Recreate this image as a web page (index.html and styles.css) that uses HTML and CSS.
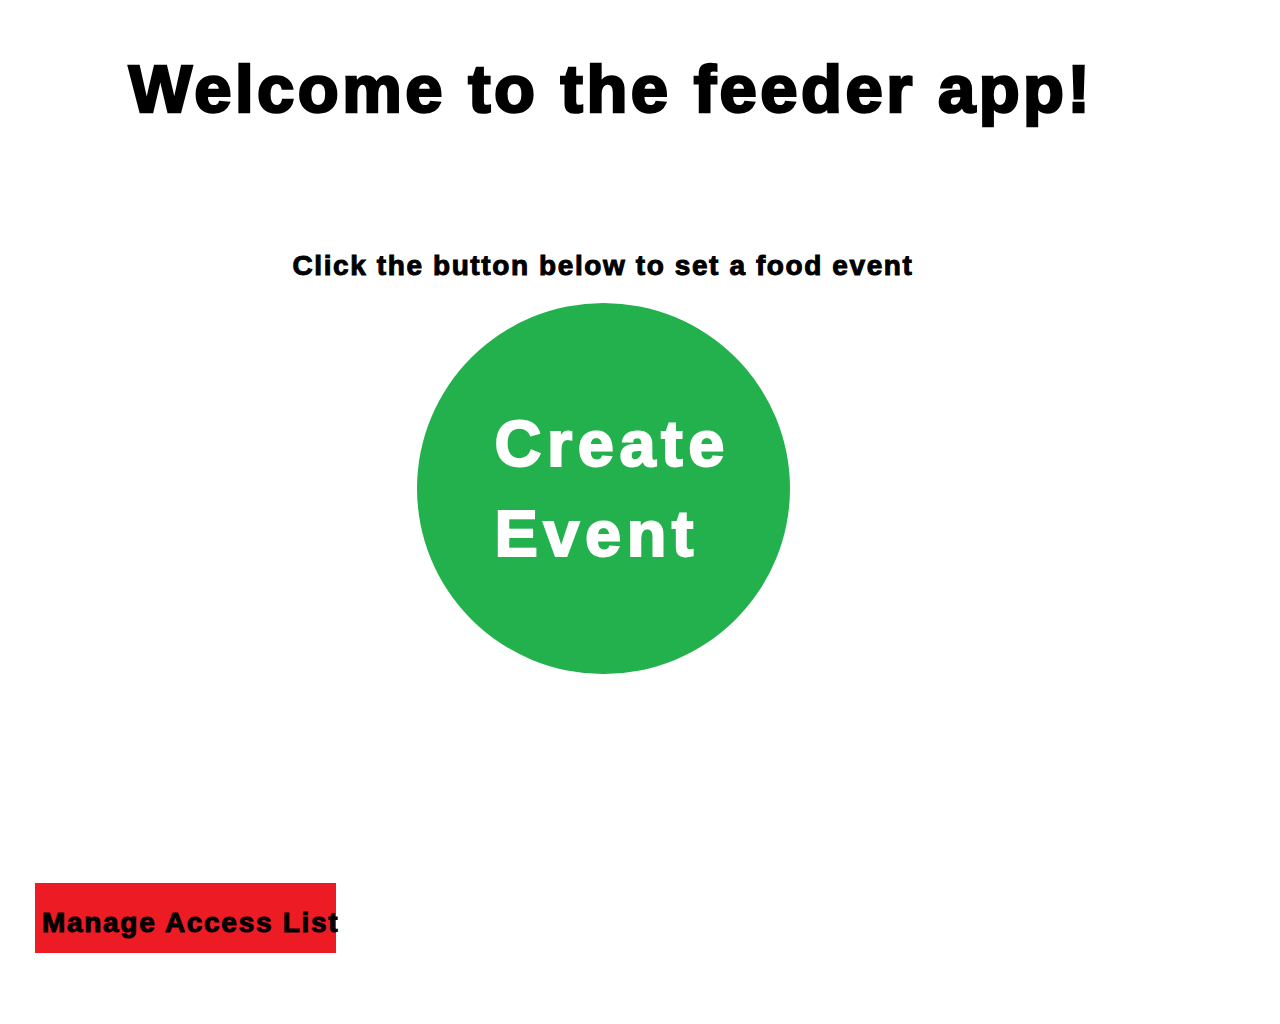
FILE: index.html
```html
<!DOCTYPE html>
<html>
<head>
<meta charset="utf-8">
<title>Feeder</title>
<link rel="stylesheet" href="styles.css">
</head>
<body>
<main class="page">
  <h1 class="title">Welcome to the feeder app!</h1>
  <p class="subtitle">Click the button below to set a food event</p>
  <button class="create">Create<br>Event</button>
  <div class="footer">
    <button class="manage">Manage Access List</button>
  </div>
</main>
</body>
</html>
```
FILE: styles.css
```css
html, body {
  margin: 0;
  padding: 0;
  background: #ffffff;
}
.page {
  width: 1206px;
  display: flex;
  flex-direction: column;
  align-items: center;
  font-family: "Liberation Sans", Arial, sans-serif;
  font-weight: bold;
}
.title {
  margin: 51px 0 0 16px;
  font-size: 67px;
  line-height: 75px;
  letter-spacing: 3.5px;
  color: #000;
  -webkit-text-stroke: 2.6px #000;
}
.subtitle {
  margin: 124px 0 0 0;
  font-size: 28px;
  line-height: 31px;
  letter-spacing: 1.6px;
  color: #000;
  -webkit-text-stroke: 1px #000;
}
.create {
  margin: 22px 0 0 0;
  width: 373px;
  height: 371px;
  border: none;
  border-radius: 50%;
  background: #22b14c;
  color: #ffffff;
  font-family: inherit;
  font-weight: bold;
  font-size: 65px;
  line-height: 90px;
  letter-spacing: 5.5px;
  text-align: left;
  padding: 0 0 0 78px;
  display: flex;
  align-items: center;
  -webkit-text-stroke: 2px #fff;
}
.footer {
  align-self: stretch;
  display: flex;
  padding: 209px 0 0 35px;
}
.manage {
  width: 301px;
  height: 70px;
  border: none;
  background: #ed1c24;
  color: #000;
  font-family: inherit;
  font-weight: bold;
  font-size: 28px;
  line-height: 31px;
  letter-spacing: 1.7px;
  white-space: nowrap;
  text-align: left;
  padding: 24px 0 0 7px;
  display: flex;
  align-items: flex-start;
  overflow: visible;
  -webkit-text-stroke: 1px #000;
}
```
